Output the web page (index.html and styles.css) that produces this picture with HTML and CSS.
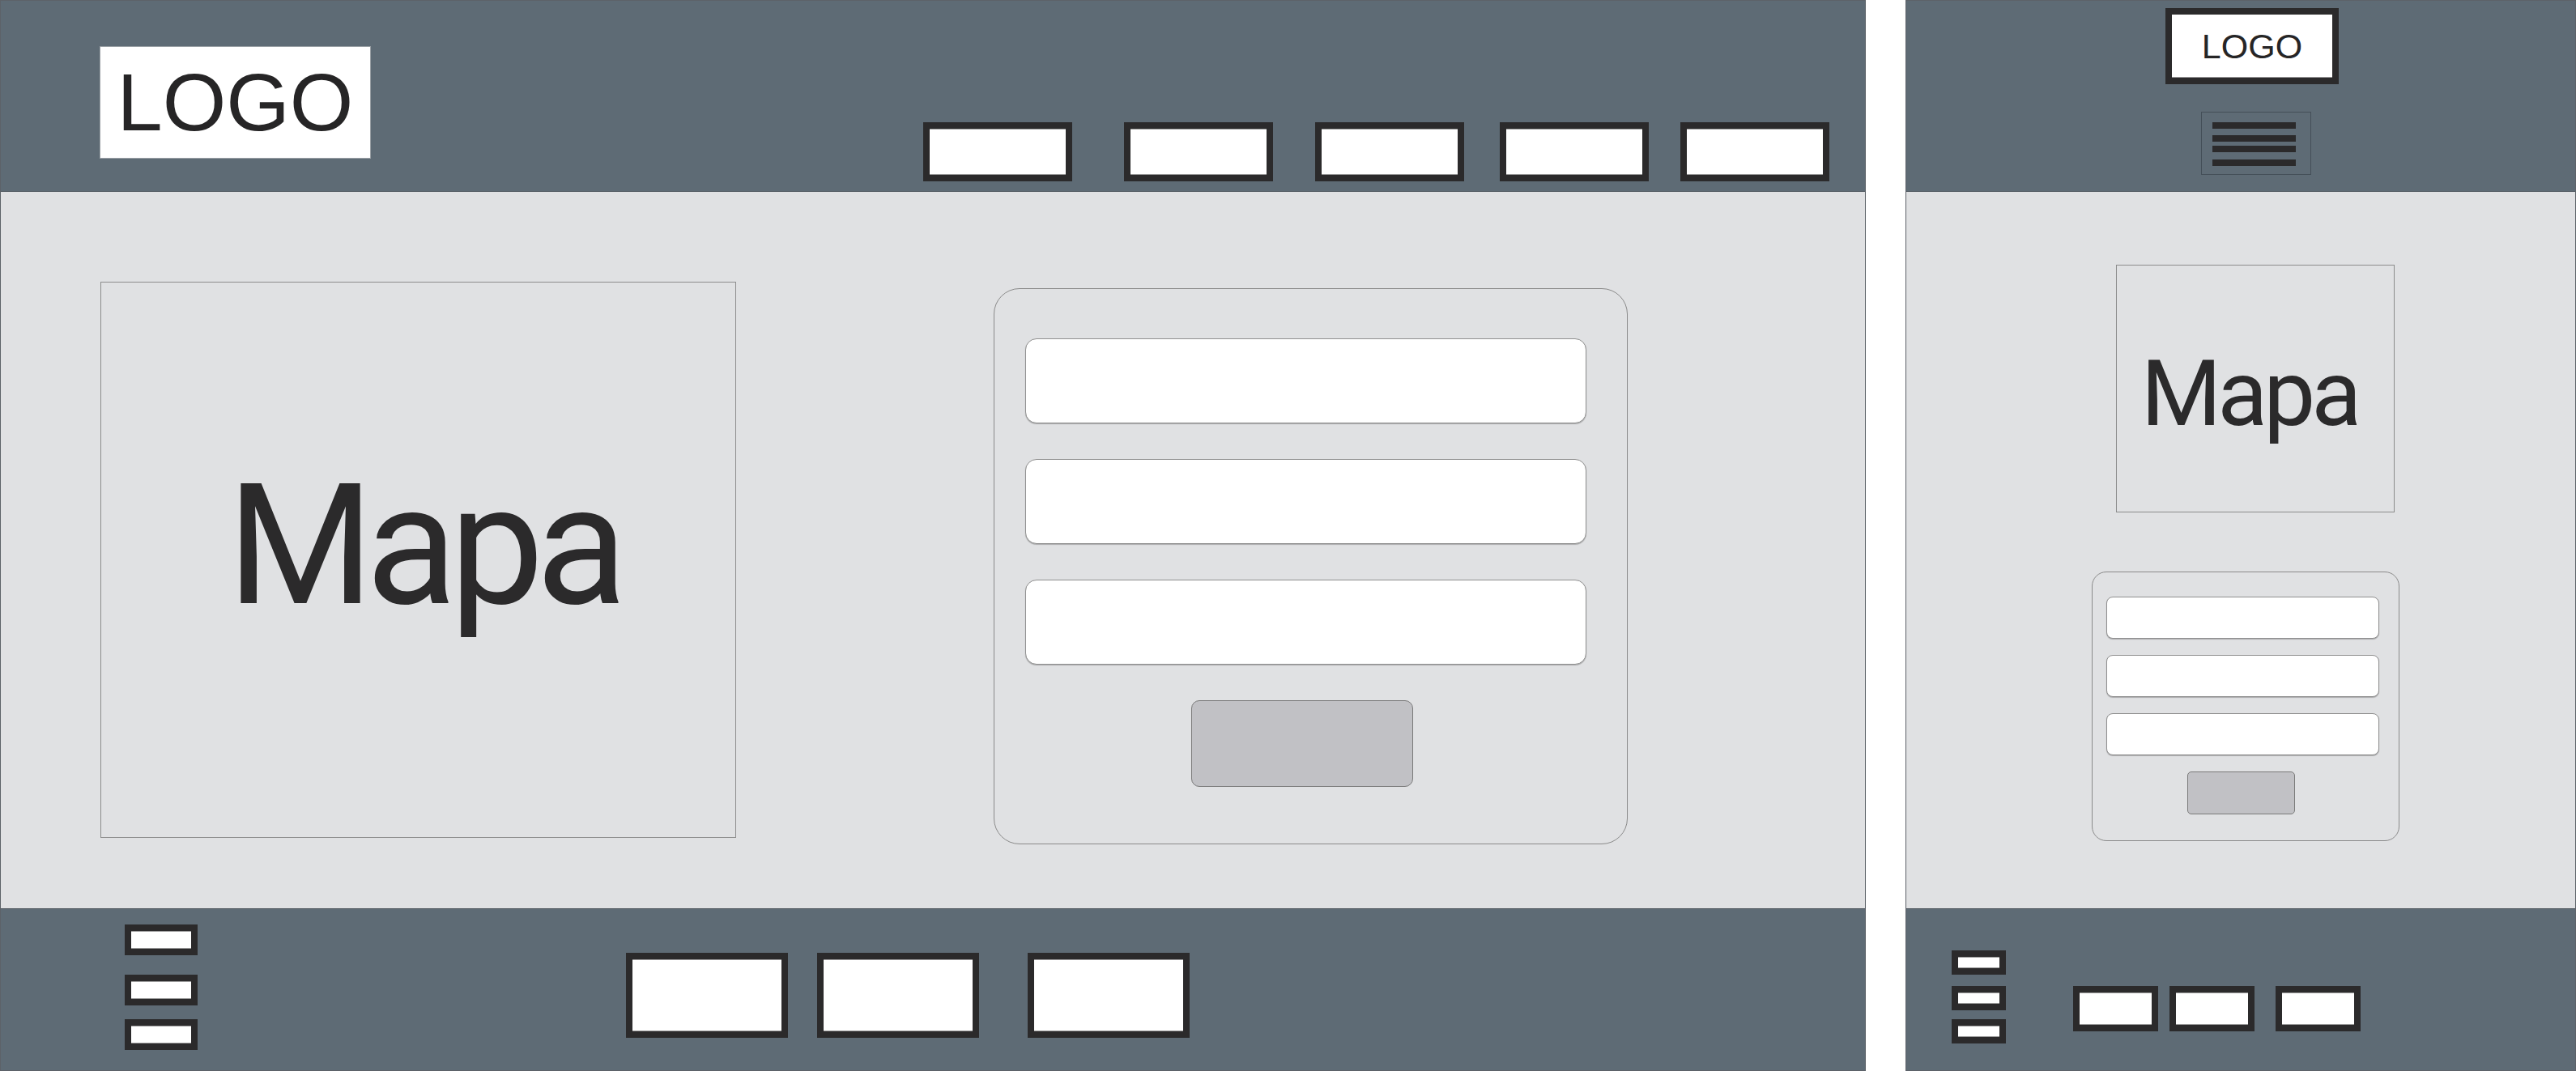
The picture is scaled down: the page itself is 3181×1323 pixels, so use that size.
FILE: index.html
```html
<!DOCTYPE html>
<html lang="pl">
<head>
<meta charset="UTF-8">
<title>Makieta - kontakt</title>
<link rel="stylesheet" href="styles.css">
</head>
<body>
<div class="page">

  <!-- wersja desktop -->
  <div class="frame desktop">
    <header class="top">
      <div class="logo">LOGO</div>
      <nav class="nav">
        <span class="nav-btn"></span>
        <span class="nav-btn"></span>
        <span class="nav-btn"></span>
        <span class="nav-btn"></span>
        <span class="nav-btn"></span>
      </nav>
    </header>
    <main class="content">
      <div class="map">Mapa</div>
      <div class="card">
        <div class="field"></div>
        <div class="field"></div>
        <div class="field"></div>
        <div class="send"></div>
      </div>
    </main>
    <footer class="bottom">
      <div class="links">
        <span class="link"></span>
        <span class="link"></span>
        <span class="link"></span>
      </div>
      <div class="foot-btns">
        <span class="foot-btn"></span>
        <span class="foot-btn"></span>
        <span class="foot-btn"></span>
      </div>
    </footer>
  </div>

  <!-- wersja mobilna -->
  <div class="frame mobile">
    <header class="top">
      <div class="logo">LOGO</div>
      <div class="burger">
        <span class="line"></span>
        <span class="line"></span>
        <span class="line"></span>
        <span class="line"></span>
      </div>
    </header>
    <main class="content">
      <div class="map">Mapa</div>
      <div class="card">
        <div class="field"></div>
        <div class="field"></div>
        <div class="field"></div>
        <div class="send"></div>
      </div>
    </main>
    <footer class="bottom">
      <div class="links">
        <span class="link"></span>
        <span class="link"></span>
        <span class="link"></span>
      </div>
      <div class="foot-btns">
        <span class="foot-btn"></span>
        <span class="foot-btn"></span>
        <span class="foot-btn"></span>
      </div>
    </footer>
  </div>

</div>
</body>
</html>
```

FILE: styles.css
```css
* { box-sizing: border-box; }

body {
  margin: 0;
  background: #fff;
  font-family: "Liberation Sans", Arial, sans-serif;
  color: #2b2a2b;
}

.page {
  display: flex;
  height: 1323px;
}

.frame {
  display: grid;
  grid-template-rows: 236px 885px 1fr;
  height: 1323px;
  border: 1px solid #5d6268;
  background: #e0e1e3;
}

.desktop { width: 2304px; }
.mobile { width: 828px; margin-left: 49px; }

/* naglowek */
.top {
  display: flex;
  align-items: flex-start;
  background: #5e6b75;
  border-bottom: 1px solid #525a61;
}

.logo {
  display: flex;
  align-items: center;
  justify-content: center;
  background: #fff;
  line-height: 1;
  color: #262526;
}

.desktop .top { padding-left: 122px; }

.desktop .logo {
  width: 335px;
  height: 139px;
  margin-top: 56px;
  border: 1px solid #9aa0a5;
  font-size: 101px;
}

.nav {
  display: flex;
  margin-left: auto;
  margin-top: 150px;
  padding-right: 44px;
}

.nav-btn, .link, .foot-btn {
  display: block;
  background: #fff;
  border: 8px solid #2b2a2b;
  box-shadow: inset 0 1px 0 #9b9b9b, inset 0 -1px 0 #9b9b9b;
}

.nav-btn { width: 184px; height: 73px; }
.nav-btn:nth-child(2) { margin-left: 64px; }
.nav-btn:nth-child(3) { margin-left: 52px; }
.nav-btn:nth-child(4) { margin-left: 44px; }
.nav-btn:nth-child(5) { margin-left: 39px; }

/* tresc */
.content {
  display: flex;
  align-items: flex-start;
}

.map {
  display: flex;
  align-items: center;
  justify-content: center;
  border: 1px solid #8c8c8c;
  font-family: Roboto, "DejaVu Sans", sans-serif;
  line-height: 1;
  color: #2b2a2b;
}

.card {
  display: flex;
  flex-direction: column;
  align-items: flex-start;
  border: 1px solid #8a8a8a;
}

.field {
  background: #fff;
  border: 1px solid #8f8f8f;
  box-shadow: 0 1px 1px rgba(0,0,0,0.25);
}

.send {
  background: #c1c1c5;
  border: 1px solid #7a7a7a;
}

.desktop .content { padding-left: 123px; }

.desktop .map {
  width: 785px;
  height: 687px;
  margin-top: 111px;
  padding: 0 0 36px 12px;
  font-size: 208px;
  letter-spacing: -10px;
}

.desktop .card {
  width: 783px;
  height: 687px;
  margin-top: 119px;
  margin-left: 318px;
  padding: 61px 0 0 38px;
  gap: 44px;
  border-radius: 32px;
}

.desktop .field {
  width: 693px;
  height: 105px;
  border-radius: 14px;
}

.desktop .send {
  width: 274px;
  height: 107px;
  margin-left: 205px;
  border-radius: 10px;
}

/* stopka */
.bottom {
  display: flex;
  align-items: flex-start;
  background: #5e6b75;
  border-top: 1px solid #4f575e;
}

.links {
  display: flex;
  flex-direction: column;
}

.foot-btns { display: flex; }

.desktop .bottom { padding-left: 153px; }
.desktop .links { margin-top: 19px; }
.desktop .link { width: 90px; height: 38px; }
.desktop .link:nth-child(2) { margin-top: 24px; }
.desktop .link:nth-child(3) { margin-top: 17px; }

.desktop .foot-btns { margin-left: 529px; margin-top: 54px; }
.desktop .foot-btn { width: 200px; height: 105px; }
.desktop .foot-btn:nth-child(2) { margin-left: 36px; }
.desktop .foot-btn:nth-child(3) { margin-left: 60px; }

/* mobile */
.mobile .top {
  flex-direction: column;
  padding-left: 320px;
}

.mobile .logo {
  width: 214px;
  height: 94px;
  margin-top: 9px;
  border: 8px solid #2b2a2b;
  box-shadow: inset 0 -1px 0 #9b9b9b;
  font-size: 43px;
}

.burger {
  display: flex;
  flex-direction: column;
  width: 136px;
  height: 78px;
  margin-top: 34px;
  margin-left: 44px;
  padding: 12px 0 0 13px;
  border: 1px solid #434e57;
}

.line {
  display: block;
  width: 103px;
  height: 8px;
  background: #2b2a2b;
}
.line:nth-child(2) { margin-top: 8px; }
.line:nth-child(3) { margin-top: 5px; }
.line:nth-child(4) { margin-top: 9px; }

.mobile .content { flex-direction: column; }

.mobile .map {
  width: 344px;
  height: 306px;
  margin-top: 90px;
  margin-left: 259px;
  padding: 12px 15px 0 0;
  font-size: 114px;
  letter-spacing: -5px;
}

.mobile .card {
  width: 380px;
  height: 333px;
  margin-top: 73px;
  margin-left: 229px;
  padding: 30px 0 0 17px;
  gap: 20px;
  border-radius: 18px;
}

.mobile .field {
  width: 337px;
  height: 52px;
  border-radius: 8px;
}

.mobile .send {
  width: 133px;
  height: 53px;
  margin-left: 100px;
  border-radius: 5px;
}

.mobile .bottom { padding-left: 56px; }
.mobile .links { margin-top: 51px; }
.mobile .link { width: 67px; height: 30px; }
.mobile .link:nth-child(2) { margin-top: 14px; }
.mobile .link:nth-child(3) { margin-top: 11px; }

.mobile .foot-btns { margin-left: 83px; margin-top: 95px; }
.mobile .foot-btn { width: 105px; height: 56px; }
.mobile .foot-btn:nth-child(2) { margin-left: 14px; }
.mobile .foot-btn:nth-child(3) { margin-left: 26px; }
```
